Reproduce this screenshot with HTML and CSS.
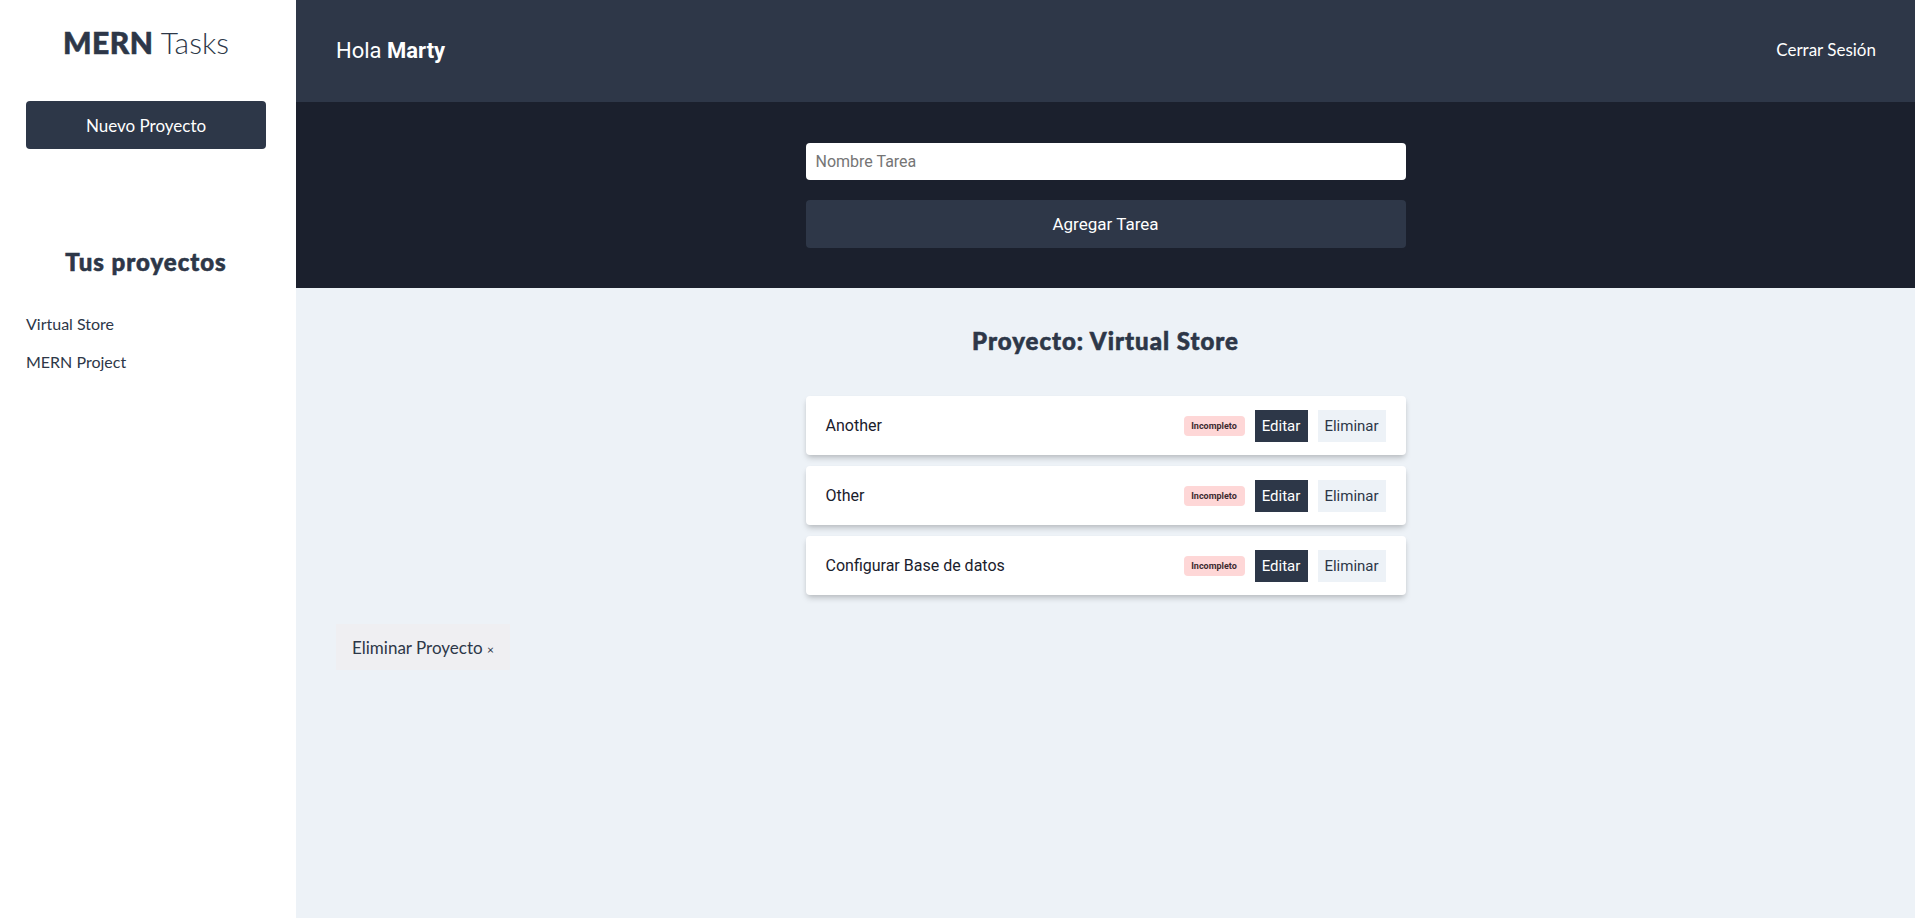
FILE: index.html
```html
<!DOCTYPE html>
<html lang="es">
<head>
<meta charset="utf-8">
<title>MERN Tasks</title>
<link rel="stylesheet" href="styles.css">
</head>
<body>
<div class="app">
  <aside class="sidebar">
    <h1 class="logo"><span class="logo-bold">MERN</span> Tasks</h1>
    <button class="btn-new">Nuevo Proyecto</button>
    <h2 class="projects-title">Tus proyectos</h2>
    <ul class="project-list">
      <li>Virtual Store</li>
      <li>MERN Project</li>
    </ul>
  </aside>
  <div class="content">
    <header class="topbar">
      <p class="greeting">Hola <strong>Marty</strong></p>
      <a class="logout">Cerrar Sesión</a>
    </header>
    <section class="task-form">
      <div class="form-inner">
        <input class="task-input" type="text" placeholder="Nombre Tarea">
        <button class="btn-add">Agregar Tarea</button>
      </div>
    </section>
    <main class="main">
      <h2 class="project-title">Proyecto: Virtual Store</h2>
      <ul class="task-list">
        <li class="task">
          <span class="task-name">Another</span>
          <div class="task-actions">
            <span class="badge">Incompleto</span>
            <button class="btn-edit">Editar</button>
            <button class="btn-delete">Eliminar</button>
          </div>
        </li>
        <li class="task">
          <span class="task-name">Other</span>
          <div class="task-actions">
            <span class="badge">Incompleto</span>
            <button class="btn-edit">Editar</button>
            <button class="btn-delete">Eliminar</button>
          </div>
        </li>
        <li class="task">
          <span class="task-name">Configurar Base de datos</span>
          <div class="task-actions">
            <span class="badge">Incompleto</span>
            <button class="btn-edit">Editar</button>
            <button class="btn-delete">Eliminar</button>
          </div>
        </li>
      </ul>
      <button class="btn-delete-project">Eliminar Proyecto <span class="times">&times;</span></button>
    </main>
  </div>
</div>
</body>
</html>
```

FILE: styles.css
```css
* { box-sizing: border-box; }
html, body { margin: 0; padding: 0; height: 100%; }
body { font-family: "Lato", "Open Sans", sans-serif; color: #2d3748; }

.app { display: flex; min-height: 918px; }

.sidebar {
  width: 296px;
  flex-shrink: 0;
  background: #ffffff;
  padding: 24px 30px 0 26px;
}
.logo {
  margin: 0;
  font-size: 30px;
  line-height: 36px;
  font-weight: 300;
  text-align: center;
  color: #2d3748;
}
.logo-bold { font-weight: 900; -webkit-text-stroke: 0.6px currentColor; letter-spacing: 0.5px; }
.btn-new {
  display: block;
  width: 100%;
  height: 48px;
  margin-top: 41px;
  border: 0;
  border-radius: 4px;
  background: #2d3748;
  color: #ffffff;
  font-family: "Lato", sans-serif;
  font-size: 17px;
  cursor: pointer;
}
.projects-title {
  margin: 98px 0 0;
  font-size: 24px;
  line-height: 29px;
  font-weight: 900;
  letter-spacing: 1px;
  -webkit-text-stroke: 0.6px currentColor;
  text-align: center;
  color: #2d3748;
}
.project-list {
  list-style: none;
  margin: 36px 0 0;
  padding: 0;
}
.project-list li {
  font-size: 16px;
  line-height: 24px;
  font-weight: 400;
  color: #2d3748;
  margin-bottom: 14px;
}

.content { flex: 1; display: flex; flex-direction: column; background: #edf2f7; }

.topbar {
  height: 102px;
  background: #2e3748;
  display: flex;
  align-items: center;
  justify-content: space-between;
  padding: 0 39px 0 40px;
}
.greeting {
  margin: 0;
  font-family: "Roboto", sans-serif;
  font-size: 22px;
  line-height: 28px;
  color: #ffffff;
}
.greeting strong { font-weight: 700; }
.logout {
  font-size: 17px;
  line-height: 20px;
  margin-bottom: 3px;
  color: #ffffff;
  cursor: pointer;
}

.task-form {
  background: #1b202d;
  padding: 41px 0 40px;
}
.form-inner {
  width: 600px;
  margin: 0 auto;
  display: flex;
  flex-direction: column;
  gap: 20px;
}
.task-input {
  height: 37px;
  border: 0;
  border-radius: 4px;
  padding: 0 10px;
  font-family: "Roboto", sans-serif;
  font-size: 16px;
  color: #2d3748;
  background: #ffffff;
}
.task-input::placeholder { color: #757575; }
.btn-add {
  height: 48px;
  border: 0;
  border-radius: 4px;
  background: #2e3748;
  color: #ffffff;
  font-family: "Roboto", sans-serif;
  font-size: 17px;
}

.main {
  padding: 38px 40px 40px;
}
.project-title {
  margin: 0;
  text-align: center;
  font-size: 24px;
  line-height: 29px;
  font-weight: 900;
  letter-spacing: 1px;
  -webkit-text-stroke: 0.6px currentColor;
  color: #2d3748;
}
.task-list {
  list-style: none;
  width: 600px;
  margin: 41px auto 0;
  padding: 0;
  display: flex;
  flex-direction: column;
  gap: 11px;
}
.task {
  height: 59px;
  background: #ffffff;
  border-radius: 4px;
  box-shadow: 0 4px 6px -1px rgba(0,0,0,0.18), 0 2px 4px -1px rgba(0,0,0,0.08);
  display: flex;
  align-items: center;
  justify-content: space-between;
  padding: 0 20px;
}
.task-name {
  font-family: "Roboto", sans-serif;
  font-size: 16px;
  color: #1a202c;
}
.task-actions { display: flex; align-items: center; gap: 10px; }
.badge {
  height: 20px;
  width: 61px;
  display: flex;
  align-items: center;
  justify-content: center;
  background: #fed7d7;
  color: #3d2a30;
  border-radius: 4px;
  font-family: "Roboto", sans-serif;
  font-size: 9px;
  font-weight: 700;
}
.btn-edit, .btn-delete {
  height: 32px;
  border: 0;
  border-radius: 0;
  padding: 0 6px;
  font-family: "Roboto", sans-serif;
  font-size: 15px;
  font-weight: 400;
}
.btn-edit { background: #2d3748; color: #ffffff; width: 53px; }
.btn-delete { background: #edf2f7; color: #2d3748; width: 68px; }

.btn-delete-project {
  display: block;
  margin-top: 29px;
  height: 46px;
  padding: 0 16px;
  border: 0;
  background: #efeff2;
  color: #2d3748;
  font-family: "Lato", sans-serif;
  font-size: 17px;
}
.times { font-size: 12px; }
```
